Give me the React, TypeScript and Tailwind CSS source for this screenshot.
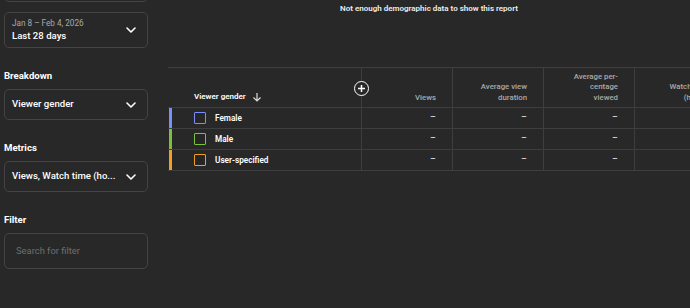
import React from "react";

const Chevron = () => (
  <svg width="10" height="6" viewBox="0 0 10 6" className="shrink-0">
    <path d="M1 1 L5 5 L9 1" stroke="#ffffff" strokeWidth="1.6" fill="none" strokeLinecap="round" strokeLinejoin="round" />
  </svg>
);

const SelectBox = ({ children }: { children: React.ReactNode }) => (
  <div className="flex h-[31px] items-center justify-between rounded-[5px] border border-[#444444] pl-[7px] pr-[11px]">
    <span className="whitespace-nowrap text-[9.6px] font-medium text-white">{children}</span>
    <Chevron />
  </div>
);

const rows = [
  { name: "Female", color: "#7b8ffb" },
  { name: "Male", color: "#7cc13a" },
  { name: "User-specified", color: "#f2a025" },
];

const cols = ["Views", "Average view\nduration", "Average per-\ncentage\nviewed", "Watch time\n(hours)"];

export default function App() {
  return (
    <div
      className="flex h-[308px] w-[690px] overflow-hidden bg-[#282828] text-white"
      style={{ fontFamily: "Roboto, 'Liberation Sans', sans-serif" }}
    >
      <aside className="flex w-[168px] shrink-0 flex-col pl-1 pr-5">
        <div className="-mt-[34px] h-[36px] rounded-[5px] border border-[#444444]" />
        <div className="mt-[10px] flex h-[36px] items-center justify-between rounded-[5px] border border-[#444444] pl-[7px] pr-[11px]">
          <div className="flex flex-col leading-none">
            <span className="whitespace-nowrap text-[8.2px] text-[#aaaaaa]">Jan 8 – Feb 4, 2026</span>
            <span className="mt-[4px] whitespace-nowrap text-[9.6px] font-medium text-white">Last 28 days</span>
          </div>
          <Chevron />
        </div>
        <div className="mt-[21px] text-[9.6px] font-bold leading-[14px]">Breakdown</div>
        <div className="mt-[6px]">
          <SelectBox>Viewer gender</SelectBox>
        </div>
        <div className="mt-[21px] text-[9.6px] font-bold leading-[14px]">Metrics</div>
        <div className="mt-[6px]">
          <SelectBox>Views, Watch time (ho...</SelectBox>
        </div>
        <div className="mt-[21px] text-[9.6px] font-bold leading-[14px]">Filter</div>
        <div className="mt-[6px] flex h-[36px] items-center rounded-[5px] border border-[#444444] pl-[11px]">
          <span className="whitespace-nowrap text-[9.4px] text-[#6f6f6f]">Search for filter</span>
        </div>
      </aside>

      <main className="flex min-w-0 flex-1 flex-col">
        <div className="pt-[3px] text-center text-[8px] font-semibold leading-[12px] text-[#eeeeee]">
          Not enough demographic data to show this report
        </div>
        <div className="mt-[52px] flex w-[740px] flex-col border-t border-[#3e3e3e]">
          <div className="flex h-[40px] border-b border-[#3e3e3e]">
            <div className="relative flex w-[194px] shrink-0 items-end border-r border-[#3e3e3e] pb-[4px] pl-[26px]">
              <span className="whitespace-nowrap text-[8px] font-semibold leading-[12px] text-white">Viewer gender</span>
              <svg width="10" height="10" viewBox="0 0 10 10" className="mb-[1px] ml-[6px]">
                <path d="M5 1 V9 M1.5 5.5 L5 9 L8.5 5.5" stroke="#dddddd" strokeWidth="1.2" fill="none" />
              </svg>
              <div className="absolute -right-[8px] top-[13px] flex h-[15px] w-[15px] items-center justify-center rounded-full border-[1.5px] border-white bg-[#282828]">
                <svg width="9" height="9" viewBox="0 0 9 9">
                  <path d="M4.5 1 V8 M1 4.5 H8" stroke="#ffffff" strokeWidth="1.5" />
                </svg>
              </div>
            </div>
            {cols.map((c, i) => (
              <div
                key={i}
                className="flex w-[91px] shrink-0 items-end justify-end border-r border-[#3e3e3e] pb-[4px] pr-[16px]"
              >
                <span className="whitespace-pre text-right text-[7.8px] font-medium leading-[10.5px] text-[#aaaaaa]">{c}</span>
              </div>
            ))}
          </div>
          {rows.map((r) => (
            <div key={r.name} className="flex h-[21px] border-b border-[#3e3e3e]">
              <div className="flex w-[194px] shrink-0 items-center border-r border-[#3e3e3e]">
                <div className="ml-[1px] h-full w-[3px]" style={{ backgroundColor: r.color }} />
                <div
                  className="ml-[22px] h-[12px] w-[12px] rounded-[1px] border-[1.5px] bg-[#262626]"
                  style={{ borderColor: r.color }}
                />
                <span className="ml-[9px] whitespace-nowrap text-[8.2px] font-semibold text-white">{r.name}</span>
              </div>
              {cols.map((_, i) => (
                <div
                  key={i}
                  className="flex w-[91px] shrink-0 items-center justify-end border-r border-[#3e3e3e] pr-[16px]"
                >
                  <span className="text-[9px] text-white">–</span>
                </div>
              ))}
            </div>
          ))}
        </div>
      </main>
    </div>
  );
}
